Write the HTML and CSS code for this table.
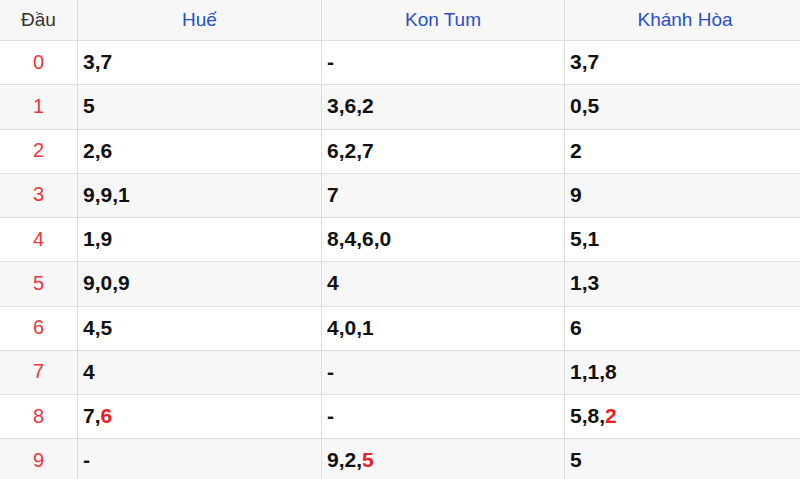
FILE: index.html
```html
<!DOCTYPE html>
<html lang="vi">
<head>
<meta charset="utf-8">
<link rel="stylesheet" href="styles.css">
</head>
<body>
<table class="loto">
  <colgroup>
    <col class="c-dau"><col class="c-prov"><col class="c-prov2"><col>
  </colgroup>
  <thead>
    <tr><th class="dau-h">Đầu</th><th>Huế</th><th>Kon Tum</th><th>Khánh Hòa</th></tr>
  </thead>
  <tbody>
    <tr><td class="dau">0</td><td>3,7</td><td>-</td><td>3,7</td></tr>
    <tr><td class="dau">1</td><td>5</td><td>3,6,2</td><td>0,5</td></tr>
    <tr><td class="dau">2</td><td>2,6</td><td>6,2,7</td><td>2</td></tr>
    <tr><td class="dau">3</td><td>9,9,1</td><td>7</td><td>9</td></tr>
    <tr><td class="dau">4</td><td>1,9</td><td>8,4,6,0</td><td>5,1</td></tr>
    <tr><td class="dau">5</td><td>9,0,9</td><td>4</td><td>1,3</td></tr>
    <tr><td class="dau">6</td><td>4,5</td><td>4,0,1</td><td>6</td></tr>
    <tr><td class="dau">7</td><td>4</td><td>-</td><td>1,1,8</td></tr>
    <tr><td class="dau">8</td><td>7,<span class="hot">6</span></td><td>-</td><td>5,8,<span class="hot">2</span></td></tr>
    <tr><td class="dau">9</td><td>-</td><td>9,2,<span class="hot">5</span></td><td>5</td></tr>
  </tbody>
</table>
</body>
</html>
```
FILE: styles.css
```css
html, body {
  margin: 0;
  padding: 0;
  background: #ffffff;
  overflow: hidden;
}
body {
  width: 800px;
  height: 479px;
  font-family: "Liberation Sans", Arial, sans-serif;
}
.loto {
  width: 806px;
  table-layout: fixed;
  border-collapse: separate;
  border-spacing: 0;
}
.c-dau { width: 78px; }
.c-prov { width: 244px; }
.c-prov2 { width: 243px; }
.loto th, .loto td {
  border-right: 1px solid #dcdcdc;
  border-bottom: 1px solid #dcdcdc;
  padding: 0 0 2px 5px;
  line-height: 1;
}
.loto th {
  height: 38px;
  background: #f7f7f7;
  color: #2a4fc8;
  font-weight: normal;
  font-size: 19px;
  text-align: center;
  padding: 0 0 2px 0;
}
.loto th.dau-h {
  color: #333333;
}
.loto td {
  height: 41.25px;
  font-size: 21px;
  font-weight: bold;
  color: #111111;
  text-align: left;
}
.loto tbody tr:nth-child(even) td {
  background: #f7f7f7;
}
.loto td.dau {
  text-align: center;
  font-weight: normal;
  font-size: 20px;
  color: #f0343c;
  padding: 0 0 2px 0;
}
.hot {
  color: #ee1c25;
}
```
